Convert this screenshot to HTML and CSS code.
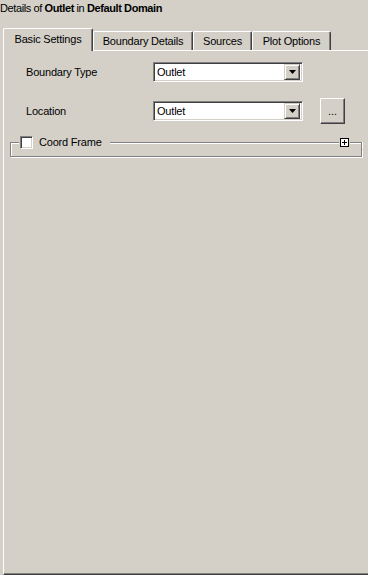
FILE: index.html
```html
<!DOCTYPE html>
<html lang="en">
<head>
    <meta charset="UTF-8">
    <title>Details of Outlet in Default Domain</title>
    <link rel="stylesheet" href="styles.css">
</head>
<body>
    <div class="title">Details of <b>Outlet</b> in <b>Default Domain</b></div>

    <div class="tabs">
        <div class="tab active" style="width: 90px;">Basic Settings</div>
        <div class="tab" style="width: 100px;">Boundary Details</div>
        <div class="tab" style="width: 59px;">Sources</div>
        <div class="tab" style="width: 79px;">Plot Options</div>
    </div>

    <div class="panel">
        <div class="form">
            <label>Boundary Type</label>
            <div class="combo">
                <span class="combo-text">Outlet</span>
                <span class="combo-btn">
                    <svg width="7" height="4" viewBox="0 0 7 4"><path d="M0 0h7L3.5 4z" fill="#000"/></svg>
                </span>
            </div>
            <span></span>

            <label>Location</label>
            <div class="combo">
                <span class="combo-text">Outlet</span>
                <span class="combo-btn">
                    <svg width="7" height="4" viewBox="0 0 7 4"><path d="M0 0h7L3.5 4z" fill="#000"/></svg>
                </span>
            </div>
            <button class="btn-dots">...</button>
        </div>

        <div class="group">
            <div class="group-head">
                <span class="edge-left"></span>
                <span class="checkbox"></span>
                <span class="group-label">Coord Frame</span>
                <span class="edge-line"></span>
                <span class="expand">
                    <svg width="9" height="9" viewBox="0 0 9 9">
                        <rect x="0.5" y="0.5" width="8" height="8" fill="#fff" stroke="#000"/>
                        <path d="M2 4.5h5M4.5 2v5" stroke="#000"/>
                    </svg>
                </span>
                <span class="edge-right"></span>
            </div>
            <div class="group-body"></div>
        </div>
    </div>
</body>
</html>
```

FILE: styles.css
```css
body {
    margin: 0;
    background-color: #d4d0c8;
    font-family: "Liberation Sans", Arial, sans-serif;
    font-size: 11px;
    letter-spacing: -0.2px;
    color: #000;
    overflow: hidden;
}
.title {
    line-height: 16px;
    height: 28px;
    letter-spacing: -0.4px;
}
.tabs {
    display: flex;
    align-items: flex-end;
    padding-left: 3px;
    height: 22px;
}
.tab {
    box-sizing: border-box;
    height: 19px;
    line-height: 17px;
    padding-top: 1px;
    text-align: center;
    white-space: nowrap;
    border-top: 1px solid #fff;
    border-left: 1px solid #fff;
    border-right: 1px solid #404040;
    border-radius: 2px 2px 0 0;
    box-shadow: inset -1px 0 0 #808080;
}
.tab.active {
    position: relative;
    height: 23px;
    margin-bottom: -1px;
    padding-top: 2px;
    background-color: #d4d0c8;
    z-index: 1;
}
.panel {
    box-sizing: border-box;
    height: 525px;
    margin-left: 3px;
    padding: 11px 6px 0 6px;
    border-top: 1px solid #fff;
    border-left: 1px solid #fff;
    border-bottom: 1px solid #404040;
    box-shadow: inset 0 -1px 0 #808080;
}
.form {
    display: grid;
    grid-template-columns: 110px 150px 25px;
    column-gap: 17px;
    row-gap: 16px;
    align-items: center;
    margin-left: 16px;
}
.combo {
    box-sizing: border-box;
    display: flex;
    align-items: center;
    height: 20px;
    padding: 2px;
    background-color: #fff;
    border: 1px solid;
    border-color: #808080 #fff #fff #808080;
    box-shadow: inset 1px 1px 0 #404040, inset -1px -1px 0 #d4d0c8;
}
.combo-text {
    flex: 1;
    padding-left: 1px;
}
.combo-btn {
    box-sizing: border-box;
    display: flex;
    align-items: center;
    justify-content: center;
    width: 16px;
    height: 16px;
    background-color: #d4d0c8;
    border: 1px solid;
    border-color: #d4d0c8 #404040 #404040 #d4d0c8;
    box-shadow: inset 1px 1px 0 #fff, inset -1px -1px 0 #808080;
}
.btn-dots {
    box-sizing: border-box;
    width: 25px;
    height: 26px;
    padding: 0;
    font-family: inherit;
    font-size: 11px;
    background-color: #d4d0c8;
    border: 1px solid;
    border-color: #fff #404040 #404040 #fff;
    box-shadow: inset -1px -1px 0 #808080;
}
.group {
    margin-top: 12px;
}
.group-head {
    display: flex;
    align-items: center;
    height: 13px;
}
.edge-left,
.edge-line,
.edge-right {
    align-self: flex-start;
    box-sizing: border-box;
    height: 7px;
    margin-top: 6px;
    border-top: 1px solid #808080;
}
.edge-left {
    width: 9px;
    border-left: 1px solid #808080;
    box-shadow: inset 1px 1px 0 #fff;
}
.edge-line {
    flex: 1;
    height: 2px;
    box-shadow: inset 0 1px 0 #fff;
}
.edge-right {
    width: 12px;
    border-right: 1px solid #808080;
    box-shadow: inset 0 1px 0 #fff, 1px 0 0 #fff;
}
.checkbox {
    box-sizing: border-box;
    width: 13px;
    height: 13px;
    margin-left: 1px;
    background-color: #fff;
    border: 1px solid;
    border-color: #808080 #fff #fff #808080;
    box-shadow: inset 1px 1px 0 #404040, inset -1px -1px 0 #d4d0c8;
}
.group-label {
    margin-left: 6px;
    padding-right: 8px;
    line-height: 13px;
}
.expand {
    display: flex;
    margin: 0 1px;
}
.group-body {
    box-sizing: border-box;
    height: 8px;
    border: 1px solid #808080;
    border-top: none;
    box-shadow: inset 1px 0 0 #fff, 1px 1px 0 #fff;
}
```
